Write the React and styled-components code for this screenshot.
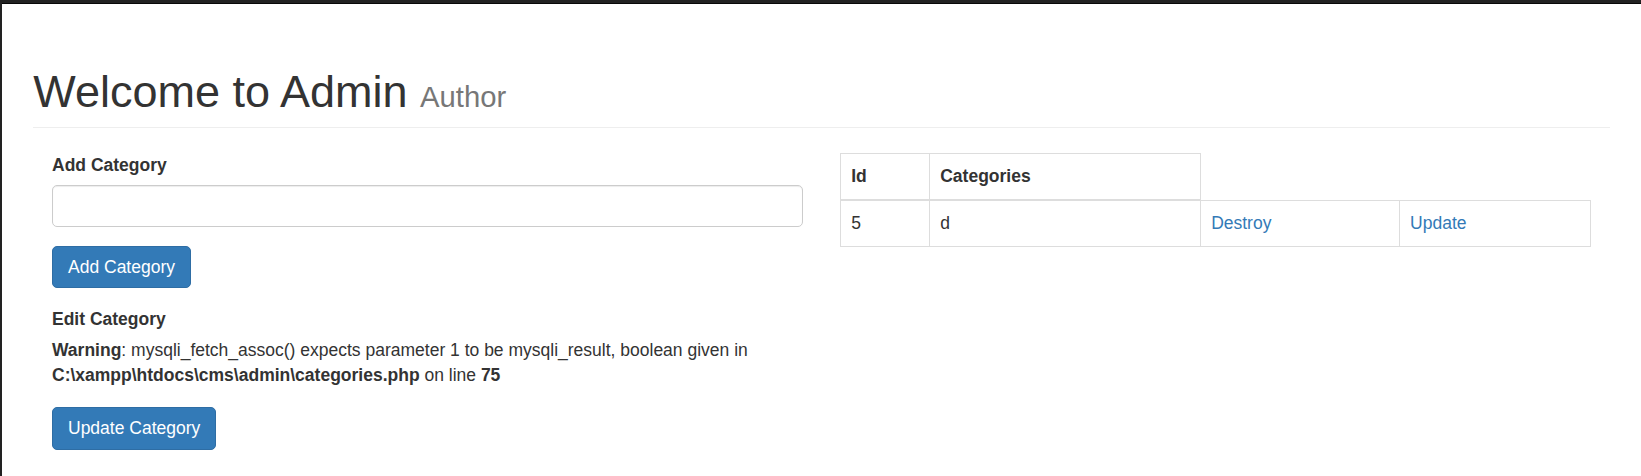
import React from "react";
import styled, { createGlobalStyle } from "styled-components";

const Global = createGlobalStyle`
  html, body { margin: 0; padding: 0; }
  body {
    background: #222;
    font-family: "Liberation Sans", Arial, Helvetica, sans-serif;
    font-size: 17.5px;
    line-height: 25px;
    color: #333;
  }
  * { box-sizing: border-box; }
`;

const PageWrapper = styled.div`
  margin: 3px 0 0 2px;
  min-height: calc(100vh - 3px);
  background: #fff;
  padding: 12.5px;
  border-top: 1px solid #080808;
`;

const Main = styled.div`
  padding: 0 18.75px;
`;

const PageHeader = styled.h1`
  margin: 50px 0 25px;
  padding-bottom: 11.25px;
  border-bottom: 1px solid #eee;
  font-size: 45px;
  line-height: 49.5px;
  font-weight: 500;
  color: #333;
  font-family: "Liberation Sans", Arial, sans-serif;
`;

const Small = styled.small`
  font-size: 65%;
  font-weight: 400;
  line-height: 1;
  color: #777;
`;

const Columns = styled.div`
  display: grid;
  grid-template-columns: 1fr 1fr;
`;

const Half = styled.div`
  padding: 0 18.75px;
  min-width: 0;
`;

const Form = styled.form`
  margin: 0;
`;

const FormGroup = styled.div`
  margin-bottom: 18.75px;
`;

const Label = styled.label`
  display: inline-block;
  max-width: 100%;
  margin-bottom: 6.25px;
  font-weight: 700;
`;

const TextInput = styled.input`
  display: block;
  width: 100%;
  height: 42.5px;
  padding: 7.5px 15px;
  font-family: inherit;
  font-size: 17.5px;
  line-height: 25px;
  color: #555;
  background: #fff;
  border: 1px solid #ccc;
  border-radius: 5px;
  box-shadow: inset 0 1px 1px rgba(0, 0, 0, 0.075);
  outline: none;
`;

const Button = styled.button`
  display: inline-block;
  height: 42.5px;
  padding: 7.5px 15px;
  font-family: inherit;
  font-size: 17.5px;
  line-height: 25px;
  font-weight: 400;
  color: #fff;
  background: #337ab7;
  border: 1px solid #2e6da4;
  border-radius: 5px;
  cursor: pointer;
`;

const Table = styled.table`
  width: 100%;
  border-collapse: collapse;
  border-spacing: 0;
  margin-bottom: 25px;
`;

const Col = styled.col`
  width: ${(p) => p.$w}px;
`;

const Th = styled.th`
  padding: 10px;
  line-height: 25px;
  text-align: left;
  vertical-align: bottom;
  font-weight: 700;
  border: 1px solid #ddd;
  border-bottom: 2px solid #ddd;
`;

const Td = styled.td`
  padding: 10px;
  line-height: 25px;
  vertical-align: top;
  border: 1px solid #ddd;
`;

const Link = styled.a`
  color: #337ab7;
  text-decoration: none;
`;

export default function App() {
  return (
    <>
      <Global />
      <PageWrapper>
        <Main>
          <PageHeader>
            Welcome to Admin <Small>Author</Small>
          </PageHeader>
          <Columns>
            <Half>
              <Form>
                <FormGroup>
                  <Label htmlFor="cat_title">Add Category</Label>
                  <TextInput id="cat_title" type="text" />
                </FormGroup>
                <FormGroup>
                  <Button type="button">Add Category</Button>
                </FormGroup>
              </Form>
              <Form>
                <FormGroup>
                  <Label>Edit Category</Label>
                  <br />
                  <b>Warning</b>: mysqli_fetch_assoc() expects parameter 1 to be mysqli_result, boolean given in{" "}
                  <b>C:\xampp\htdocs\cms\admin\categories.php</b> on line <b>75</b>
                  <br />
                </FormGroup>
                <FormGroup>
                  <Button type="button">Update Category</Button>
                </FormGroup>
              </Form>
            </Half>
            <Half>
              <Table>
                <colgroup>
                  <Col $w={89} />
                  <Col $w={271} />
                  <Col $w={199} />
                  <Col $w={191} />
                </colgroup>
                <thead>
                  <tr>
                    <Th>Id</Th>
                    <Th>Categories</Th>
                  </tr>
                </thead>
                <tbody>
                  <tr>
                    <Td>5</Td>
                    <Td>d</Td>
                    <Td>
                      <Link href="#">Destroy</Link>
                    </Td>
                    <Td>
                      <Link href="#">Update</Link>
                    </Td>
                  </tr>
                </tbody>
              </Table>
            </Half>
          </Columns>
        </Main>
      </PageWrapper>
    </>
  );
}
